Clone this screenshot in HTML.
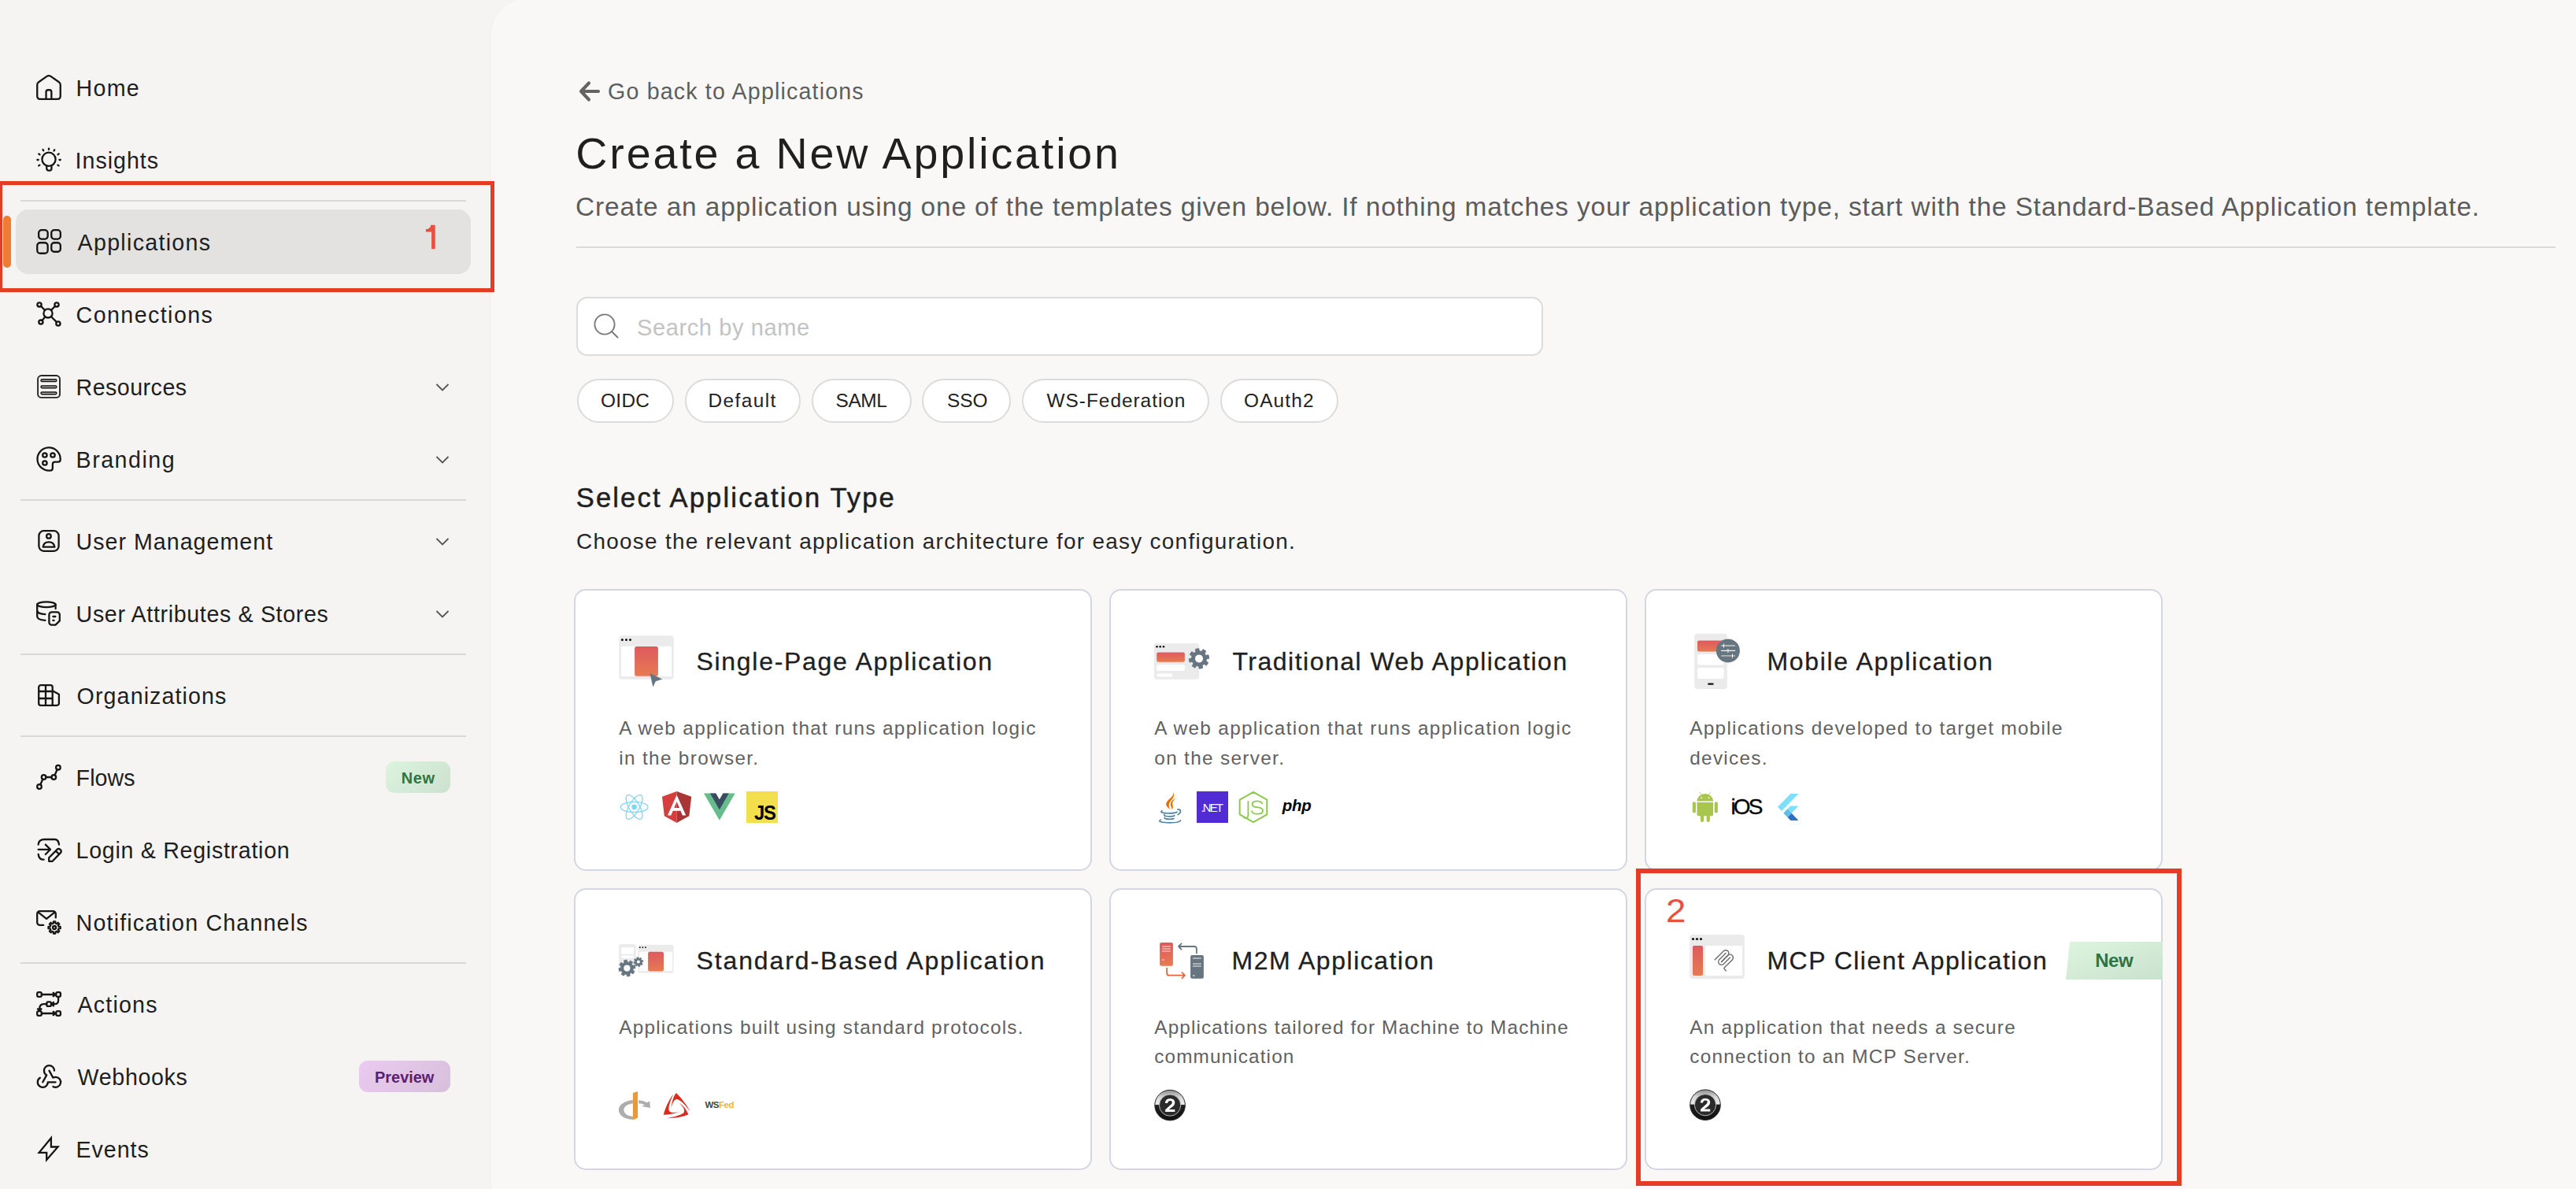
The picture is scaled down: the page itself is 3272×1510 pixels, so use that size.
<!DOCTYPE html>
<html><head><meta charset="utf-8"><style>
html,body{margin:0;padding:0;width:3272px;height:1510px;overflow:hidden;background:#f5f4f2;font-family:"Liberation Sans", sans-serif;}
.t{position:absolute;white-space:nowrap;line-height:1;}
.b{position:absolute;}
.ic{position:absolute;overflow:visible;}
</style></head><body>
<div class="b" style="left:26.0px;top:254.0px;width:566.0px;height:2.0px;background:#dad8d5"></div>
<div class="b" style="left:26.0px;top:634.0px;width:566.0px;height:2.0px;background:#dad8d5"></div>
<div class="b" style="left:26.0px;top:830.0px;width:566.0px;height:2.0px;background:#dad8d5"></div>
<div class="b" style="left:26.0px;top:934.0px;width:566.0px;height:2.0px;background:#dad8d5"></div>
<div class="b" style="left:26.0px;top:1222.0px;width:566.0px;height:2.0px;background:#dad8d5"></div>
<div class="b" style="left:20.0px;top:266.0px;width:578.0px;height:82.0px;background:#e3e2e0;border-radius:16px"></div>
<div class="b" style="left:4.0px;top:274.0px;width:10.0px;height:66.0px;background:#ee7d31;border-radius:5px"></div>
<div class="t" style="left:96.6px;top:97.8px;font-size:28.6px;color:#1e1e1e;letter-spacing:1.300px;font-weight:400;">Home</div>
<svg class="ic" style="left:46px;top:96px" width="32" height="32" viewBox="0 0 32 32"><path d="M1.25 26 V11.8 Q1.25 9.6 3.1 8.3 L13.6 0.9 Q16 -0.8 18.4 0.9 L28.9 8.3 Q30.75 9.6 30.75 11.8 V26 Q30.75 29.85 26.9 29.85 H5.1 Q1.25 29.85 1.25 26 Z" fill="none" stroke="#151515" stroke-width="2.3" stroke-linecap="round" stroke-linejoin="round"/><path d="M12.55 29.85 V20.8 Q12.55 18.25 15.1 18.25 H16.8 Q19.35 18.25 19.35 20.8 V29.85" fill="none" stroke="#151515" stroke-width="2.3" stroke-linecap="round" stroke-linejoin="round"/></svg>
<div class="t" style="left:95.6px;top:189.8px;font-size:28.6px;color:#1e1e1e;letter-spacing:0.986px;font-weight:400;">Insights</div>
<svg class="ic" style="left:46px;top:188px" width="32" height="32" viewBox="0 0 32 32"><circle cx="16" cy="14.3" r="8.6" fill="none" stroke="#151515" stroke-width="2.3" stroke-linecap="round" stroke-linejoin="round"/><path d="M13.25 22.3 V26 a2.65 2.65 0 0 0 2.65 2.65 H16.8 a2.65 2.65 0 0 0 2.65 -2.65 V22.3" fill="none" stroke="#151515" stroke-width="2.3" stroke-linecap="round" stroke-linejoin="round"/><path d="M16 0.6 L16 1.9" fill="none" stroke="#151515" stroke-width="2.3" stroke-linecap="round" stroke-linejoin="round"/><path d="M8.5 2 L9.2 3.2" fill="none" stroke="#151515" stroke-width="2.3" stroke-linecap="round" stroke-linejoin="round"/><path d="M23.2 2.3 L22.5 3.5" fill="none" stroke="#151515" stroke-width="2.3" stroke-linecap="round" stroke-linejoin="round"/><path d="M3.3 7.5 L4.5 8.3" fill="none" stroke="#151515" stroke-width="2.3" stroke-linecap="round" stroke-linejoin="round"/><path d="M28.7 7.4 L27.5 8.2" fill="none" stroke="#151515" stroke-width="2.3" stroke-linecap="round" stroke-linejoin="round"/><path d="M1.4 15 L2.7 15" fill="none" stroke="#151515" stroke-width="2.3" stroke-linecap="round" stroke-linejoin="round"/><path d="M29.5 15 L30.8 15" fill="none" stroke="#151515" stroke-width="2.3" stroke-linecap="round" stroke-linejoin="round"/><path d="M3.2 22.4 L4.4 21.6" fill="none" stroke="#151515" stroke-width="2.3" stroke-linecap="round" stroke-linejoin="round"/><path d="M28.6 22.4 L27.4 21.6" fill="none" stroke="#151515" stroke-width="2.3" stroke-linecap="round" stroke-linejoin="round"/></svg>
<div class="t" style="left:98.6px;top:293.8px;font-size:28.6px;color:#1e1e1e;letter-spacing:1.291px;font-weight:400;">Applications</div>
<svg class="ic" style="left:46px;top:292px" width="32" height="32" viewBox="0 0 32 32"><rect x="3.15" y="0.15" width="11.5" height="11.4" rx="3.6" fill="none" stroke="#151515" stroke-width="2.3" stroke-linecap="round" stroke-linejoin="round"/><rect x="19.25" y="0.15" width="11.6" height="11.4" rx="3.6" fill="none" stroke="#151515" stroke-width="2.3" stroke-linecap="round" stroke-linejoin="round"/><rect x="1.25" y="16.25" width="13.4" height="13.5" rx="3.8" fill="none" stroke="#151515" stroke-width="2.3" stroke-linecap="round" stroke-linejoin="round"/><rect x="19.25" y="16.25" width="11.6" height="11.5" rx="3.6" fill="none" stroke="#151515" stroke-width="2.3" stroke-linecap="round" stroke-linejoin="round"/></svg>
<div class="t" style="left:96.6px;top:385.8px;font-size:28.6px;color:#1e1e1e;letter-spacing:1.430px;font-weight:400;">Connections</div>
<svg class="ic" style="left:46px;top:384px" width="32" height="32" viewBox="0 0 32 32"><circle cx="15" cy="13.9" r="5.6" fill="none" stroke="#151515" stroke-width="2.3" stroke-linecap="round" stroke-linejoin="round"/><circle cx="4" cy="2.9" r="2.6" fill="none" stroke="#151515" stroke-width="2.3" stroke-linecap="round" stroke-linejoin="round"/><circle cx="26" cy="2.9" r="2.6" fill="none" stroke="#151515" stroke-width="2.3" stroke-linecap="round" stroke-linejoin="round"/><circle cx="5.9" cy="25.1" r="2.6" fill="none" stroke="#151515" stroke-width="2.3" stroke-linecap="round" stroke-linejoin="round"/><circle cx="27.9" cy="27" r="2.6" fill="none" stroke="#151515" stroke-width="2.3" stroke-linecap="round" stroke-linejoin="round"/><path d="M5.9 4.8 L11 9.9 M24.1 4.8 L19 9.9 M7.4 23 L11.3 18.4 M26 25.1 L19.1 18.2" fill="none" stroke="#151515" stroke-width="2.3" stroke-linecap="round" stroke-linejoin="round"/></svg>
<div class="t" style="left:96.6px;top:477.8px;font-size:28.6px;color:#1e1e1e;letter-spacing:0.475px;font-weight:400;">Resources</div>
<svg class="ic" style="left:46px;top:476px" width="32" height="32" viewBox="0 0 32 32"><rect x="2.1" y="1" width="27.9" height="27.9" rx="4.5" fill="none" stroke="#252525" stroke-width="1.9"/><g fill="#bdbdbd" stroke="#111" stroke-width="1.4"><rect x="6" y="5.8" width="19.9" height="2.7" rx="1.35"/><rect x="6" y="14" width="19.9" height="2.7" rx="1.35"/><rect x="6" y="22" width="19.9" height="2.7" rx="1.35"/></g></svg>
<svg class="ic" style="left:553px;top:486px" width="18" height="12" viewBox="0 0 18 12"><path d="M1.5 2 L9 9.5 L16.5 2" fill="none" stroke="#555" stroke-width="1.8"/></svg>
<div class="t" style="left:96.6px;top:569.8px;font-size:28.6px;color:#1e1e1e;letter-spacing:1.500px;font-weight:400;">Branding</div>
<svg class="ic" style="left:46px;top:568px" width="32" height="32" viewBox="0 0 32 32"><path d="M30.7 15 A14.6 14.6 0 1 0 17.6 29.55 Q20.85 29.55 20.85 26.5 V21.5 Q20.85 18.6 23.7 18.6 H27.8 Q30.7 18.6 30.7 15.8 Z" fill="none" stroke="#151515" stroke-width="2.3" stroke-linecap="round" stroke-linejoin="round"/><circle cx="10.9" cy="10" r="2.7" fill="none" stroke="#151515" stroke-width="2.3" stroke-linecap="round" stroke-linejoin="round" stroke-width="2.1"/><circle cx="21" cy="10" r="2.7" fill="none" stroke="#151515" stroke-width="2.3" stroke-linecap="round" stroke-linejoin="round" stroke-width="2.1"/><circle cx="10.9" cy="20" r="2.7" fill="none" stroke="#151515" stroke-width="2.3" stroke-linecap="round" stroke-linejoin="round" stroke-width="2.1"/></svg>
<svg class="ic" style="left:553px;top:578px" width="18" height="12" viewBox="0 0 18 12"><path d="M1.5 2 L9 9.5 L16.5 2" fill="none" stroke="#555" stroke-width="1.8"/></svg>
<div class="t" style="left:96.6px;top:673.8px;font-size:28.6px;color:#1e1e1e;letter-spacing:1.021px;font-weight:400;">User Management</div>
<svg class="ic" style="left:46px;top:672px" width="32" height="32" viewBox="0 0 32 32"><rect x="3.4" y="2.2" width="25.2" height="25.6" rx="6.2" fill="none" stroke="#151515" stroke-width="2.3" stroke-linecap="round" stroke-linejoin="round"/><circle cx="15.9" cy="8.9" r="2.8" fill="none" stroke="#151515" stroke-width="2.3" stroke-linecap="round" stroke-linejoin="round" stroke-width="2.1"/><path d="M8.6 22.6 C9.2 18.6 12.2 16.4 16 16.4 C19.8 16.4 22.8 18.6 23.4 22.6 Z" fill="none" stroke="#151515" stroke-width="2.3" stroke-linecap="round" stroke-linejoin="round"/></svg>
<svg class="ic" style="left:553px;top:682px" width="18" height="12" viewBox="0 0 18 12"><path d="M1.5 2 L9 9.5 L16.5 2" fill="none" stroke="#555" stroke-width="1.8"/></svg>
<div class="t" style="left:96.6px;top:765.8px;font-size:28.6px;color:#1e1e1e;letter-spacing:0.656px;font-weight:400;">User Attributes &amp; Stores</div>
<svg class="ic" style="left:46px;top:764px" width="32" height="32" viewBox="0 0 32 32"><ellipse cx="12.9" cy="3.75" rx="11.7" ry="3.45" fill="none" stroke="#151515" stroke-width="2.3" stroke-linecap="round" stroke-linejoin="round"/><path d="M1.2 3.75 V18.5 C1.2 21.5 5 23.5 11.4 23.9 M1.3 11.5 C1.6 14.2 5.5 15.8 11.4 16.1 M24.6 3.75 V9" fill="none" stroke="#151515" stroke-width="2.3" stroke-linecap="round" stroke-linejoin="round"/><path d="M16.4 25.8 V16.5 a3.2 3.2 0 0 1 3.2 -3.2 H26.6 a3.2 3.2 0 0 1 3.2 3.2 V24.4 L24.5 29.6 H19.6 a3.2 3.2 0 0 1 -3.2 -3.2 Z" fill="none" stroke="#151515" stroke-width="2.3" stroke-linecap="round" stroke-linejoin="round"/><path d="M21.4 19 H24.4 M21.4 23.9 H22.6" fill="none" stroke="#151515" stroke-width="2.3" stroke-linecap="round" stroke-linejoin="round" stroke-width="2.2"/></svg>
<svg class="ic" style="left:553px;top:774px" width="18" height="12" viewBox="0 0 18 12"><path d="M1.5 2 L9 9.5 L16.5 2" fill="none" stroke="#555" stroke-width="1.8"/></svg>
<div class="t" style="left:97.6px;top:869.8px;font-size:28.6px;color:#1e1e1e;letter-spacing:1.117px;font-weight:400;">Organizations</div>
<svg class="ic" style="left:46px;top:868px" width="32" height="32" viewBox="0 0 32 32"><path d="M20.7 27.8 H5.8 a2.6 2.6 0 0 1 -2.6 -2.6 V4.8 a2.6 2.6 0 0 1 2.6 -2.6 H18.1 a2.6 2.6 0 0 1 2.6 2.6 Z M3.2 10 H20.7 M3.2 19 H20.7 M12 2.2 V27.8 M20.7 9.2 L28.9 13.8 V25.2 a2.6 2.6 0 0 1 -2.6 2.6 H20.7" fill="none" stroke="#151515" stroke-width="2.3" stroke-linecap="round" stroke-linejoin="round"/></svg>
<div class="t" style="left:96.6px;top:973.8px;font-size:28.6px;color:#1e1e1e;letter-spacing:0.075px;font-weight:400;">Flows</div>
<svg class="ic" style="left:46px;top:972px" width="32" height="32" viewBox="0 0 32 32"><circle cx="4" cy="27" r="2.8" fill="none" stroke="#151515" stroke-width="2.3" stroke-linecap="round" stroke-linejoin="round"/><circle cx="9.6" cy="15" r="2.8" fill="none" stroke="#151515" stroke-width="2.3" stroke-linecap="round" stroke-linejoin="round"/><circle cx="22.3" cy="15" r="2.8" fill="none" stroke="#151515" stroke-width="2.3" stroke-linecap="round" stroke-linejoin="round"/><circle cx="27.9" cy="2.7" r="2.8" fill="none" stroke="#151515" stroke-width="2.3" stroke-linecap="round" stroke-linejoin="round"/><path d="M5.2 24.5 L8.4 17.5 M12.4 15 H19.5 M23.5 12.5 L26.7 5.2" fill="none" stroke="#151515" stroke-width="2.3" stroke-linecap="round" stroke-linejoin="round"/></svg>
<div class="t" style="left:96.6px;top:1065.8px;font-size:28.6px;color:#1e1e1e;letter-spacing:0.717px;font-weight:400;">Login &amp; Registration</div>
<svg class="ic" style="left:46px;top:1064px" width="32" height="32" viewBox="0 0 32 32"><path d="M2.7 8.5 C3 4.3 6 2 10.5 2 H23.5 C26.8 2 28.6 4.6 29 8.7 M2.7 20.9 C3 25 5.5 27.7 9.6 27.7" fill="none" stroke="#151515" stroke-width="2.3" stroke-linecap="round" stroke-linejoin="round"/><path d="M2.7 14.8 H18 M11.8 8.6 L18 14.8 L11.8 21" fill="none" stroke="#151515" stroke-width="2.3" stroke-linecap="round" stroke-linejoin="round"/><path d="M16.2 29.8 V25.2 L26.8 14.6 a2.3 2.3 0 0 1 3.3 0 L31.1 15.6 a2.3 2.3 0 0 1 0 3.3 L20.6 29.8 Z M24.8 16.6 L29 20.8" fill="none" stroke="#151515" stroke-width="2.3" stroke-linecap="round" stroke-linejoin="round"/></svg>
<div class="t" style="left:96.6px;top:1157.8px;font-size:28.6px;color:#1e1e1e;letter-spacing:1.185px;font-weight:400;">Notification Channels</div>
<svg class="ic" style="left:46px;top:1156px" width="32" height="32" viewBox="0 0 32 32"><path d="M24.8 9.4 V4.6 a3.5 3.5 0 0 0 -3.5 -3.5 H4.7 a3.5 3.5 0 0 0 -3.5 3.5 V15.4 a3.5 3.5 0 0 0 3.5 3.5 H9.2 M2 2.2 L13.1 10.9 L24 2.2" fill="none" stroke="#151515" stroke-width="2.3" stroke-linecap="round" stroke-linejoin="round"/><path d="M21.79 16.55 L21.90 14.39 L24.30 14.39 L24.41 16.55 L26.03 17.23 L27.63 15.77 L29.33 17.47 L27.87 19.07 L28.55 20.69 L30.71 20.80 L30.71 23.20 L28.55 23.31 L27.87 24.93 L29.33 26.53 L27.63 28.23 L26.03 26.77 L24.41 27.45 L24.30 29.61 L21.90 29.61 L21.79 27.45 L20.17 26.77 L18.57 28.23 L16.87 26.53 L18.33 24.93 L17.65 23.31 L15.49 23.20 L15.49 20.80 L17.65 20.69 L18.33 19.07 L16.87 17.47 L18.57 15.77 L20.17 17.23 Z" fill="none" stroke="#151515" stroke-width="2.3" stroke-linecap="round" stroke-linejoin="round" stroke-width="2"/><circle cx="23.1" cy="22" r="2" fill="none" stroke="#151515" stroke-width="2.3" stroke-linecap="round" stroke-linejoin="round" stroke-width="2"/></svg>
<div class="t" style="left:98.6px;top:1261.8px;font-size:28.6px;color:#1e1e1e;letter-spacing:1.183px;font-weight:400;">Actions</div>
<svg class="ic" style="left:46px;top:1260px" width="32" height="32" viewBox="0 0 32 32"><rect x="1.2" y="0.2" width="5.6" height="5.6" rx="1.8" fill="none" stroke="#151515" stroke-width="2.3" stroke-linecap="round" stroke-linejoin="round"/><rect x="25.3" y="0.2" width="5.6" height="5.6" rx="1.8" fill="none" stroke="#151515" stroke-width="2.3" stroke-linecap="round" stroke-linejoin="round"/><rect x="13.3" y="12.35" width="5.6" height="5.6" rx="1.8" fill="none" stroke="#151515" stroke-width="2.3" stroke-linecap="round" stroke-linejoin="round"/><rect x="1.2" y="24.2" width="5.6" height="5.6" rx="1.8" fill="none" stroke="#151515" stroke-width="2.3" stroke-linecap="round" stroke-linejoin="round"/><rect x="25.3" y="24.2" width="5.6" height="5.6" rx="1.8" fill="none" stroke="#151515" stroke-width="2.3" stroke-linecap="round" stroke-linejoin="round"/><path d="M6.8 3 H24.3 M21.8 0.8 L24.3 3 L21.8 5.2 M28.1 5.8 V10.5 Q28.1 15.15 23.4 15.15 H19.8 M22 12.9 L19.8 15.15 L22 17.4 M13.3 15.15 H9.5 Q4.4 15.15 4.2 21 V23.4 M2 21.2 L4.2 23.4 L6.4 21.2 M6.8 27 H24.3 M21.8 24.8 L24.3 27 L21.8 29.2" fill="none" stroke="#151515" stroke-width="2.3" stroke-linecap="round" stroke-linejoin="round"/></svg>
<div class="t" style="left:98.6px;top:1353.8px;font-size:28.6px;color:#1e1e1e;letter-spacing:0.671px;font-weight:400;">Webhooks</div>
<svg class="ic" style="left:46px;top:1352px" width="32" height="32" viewBox="0 0 32 32"><g transform="translate(-3.1 -5.4) scale(1.63)" fill="none" stroke="#151515" stroke-width="1.41" stroke-linecap="round" stroke-linejoin="round"><path d="M4.876 13.61a4 4 0 1 0 6.124 3.39h6"/><path d="M15.066 20.502a4 4 0 1 0 1.934 -7.502c-.706 0 -1.424 .179 -2 .5l-3 -5.5"/><path d="M16 8a4 4 0 1 0 -8 0c0 1.506 .77 2.818 2 3.5l-3 5.5"/></g></svg>
<div class="t" style="left:96.6px;top:1445.8px;font-size:28.6px;color:#1e1e1e;letter-spacing:0.940px;font-weight:400;">Events</div>
<svg class="ic" style="left:46px;top:1444px" width="32" height="32" viewBox="0 0 32 32"><path d="M18.9 1.2 V12.5 H27.6 L13.2 29 V19.8 H3.6 Z" fill="none" stroke="#151515" stroke-width="2.3" stroke-linejoin="miter" stroke-miterlimit="10"/></svg>
<div class="b" style="left:490.0px;top:967.0px;width:82.0px;height:40.0px;background:linear-gradient(135deg,#dcf3de,#cce2cf);border-radius:11px"></div>
<div class="t" style="left:509.7px;top:978.1px;font-size:20px;color:#2f7443;letter-spacing:0.600px;font-weight:700;">New</div>
<div class="b" style="left:456.0px;top:1347.0px;width:116.0px;height:40.0px;background:linear-gradient(135deg,#ebcaf1,#d7c0db);border-radius:11px"></div>
<div class="t" style="left:476.0px;top:1358.1px;font-size:20px;color:#5a2170;letter-spacing:-0.030px;font-weight:700;">Preview</div>
<div class="b" style="left:624px;top:-2px;width:2700px;height:1600px;background:#f9f8f6;border-top-left-radius:46px;box-shadow:0 0 5px rgba(0,0,0,0.022)"></div>
<svg class="ic" style="left:734px;top:102px" width="30" height="28" viewBox="0 0 30 28"><path d="M14 3.5 L4 14 L14 24.5 M4.5 14 H26" fill="none" stroke="#636363" stroke-width="4.1" stroke-linecap="round" stroke-linejoin="round"/></svg>
<div class="t" style="left:772.1px;top:101.8px;font-size:28.6px;color:#5e5e5e;letter-spacing:1.168px;font-weight:400;">Go back to Applications</div>
<div class="t" style="left:731.3px;top:167.7px;font-size:55.6px;color:#1f1f1f;letter-spacing:2.848px;font-weight:400;">Create a New Application</div>
<div class="t" style="left:731.0px;top:245.7px;font-size:33.4px;color:#5c5c5c;letter-spacing:0.877px;font-weight:400;">Create an application using one of the templates given below. If nothing matches your application type, start with the Standard-Based Application template.</div>
<div class="b" style="left:732.0px;top:313.0px;width:2514.0px;height:2.0px;background:#d9d9d9"></div>
<div class="b" style="left:732.0px;top:377.0px;width:1228.0px;height:75.0px;background:#fff;border:2px solid #dcdcdc;border-radius:14px;box-sizing:border-box"></div>
<svg class="ic" style="left:750px;top:394px" width="40" height="40" viewBox="0 0 40 40"><circle cx="18" cy="18" r="12.6" fill="none" stroke="#7a7a7a" stroke-width="1.9"/><path d="M27 27 L34.5 34.5" stroke="#7a7a7a" stroke-width="1.9" stroke-linecap="round"/></svg>
<div class="t" style="left:809.0px;top:402.0px;font-size:29px;color:#c3c3c3;letter-spacing:0.615px;font-weight:400;">Search by name</div>
<div class="b" style="left:732.8px;top:481.0px;width:123.0px;height:56.0px;background:#fff;border:2px solid #dcdcdc;border-radius:28px;box-sizing:border-box"></div>
<div class="t" style="left:763.0px;top:497.3px;font-size:24.4px;color:#222;letter-spacing:0.333px;font-weight:400;">OIDC</div>
<div class="b" style="left:869.9px;top:481.0px;width:147.0px;height:56.0px;background:#fff;border:2px solid #dcdcdc;border-radius:28px;box-sizing:border-box"></div>
<div class="t" style="left:899.5px;top:497.3px;font-size:24.4px;color:#222;letter-spacing:1.417px;font-weight:400;">Default</div>
<div class="b" style="left:1031.0px;top:481.0px;width:127.2px;height:56.0px;background:#fff;border:2px solid #dcdcdc;border-radius:28px;box-sizing:border-box"></div>
<div class="t" style="left:1061.5px;top:497.3px;font-size:24.4px;color:#222;letter-spacing:-0.333px;font-weight:400;">SAML</div>
<div class="b" style="left:1171.4px;top:481.0px;width:112.6px;height:56.0px;background:#fff;border:2px solid #dcdcdc;border-radius:28px;box-sizing:border-box"></div>
<div class="t" style="left:1202.9px;top:497.3px;font-size:24.4px;color:#222;letter-spacing:0.000px;font-weight:400;">SSO</div>
<div class="b" style="left:1298.0px;top:481.0px;width:238.0px;height:56.0px;background:#fff;border:2px solid #dcdcdc;border-radius:28px;box-sizing:border-box"></div>
<div class="t" style="left:1329.6px;top:497.3px;font-size:24.4px;color:#222;letter-spacing:0.983px;font-weight:400;">WS-Federation</div>
<div class="b" style="left:1550.0px;top:481.0px;width:149.8px;height:56.0px;background:#fff;border:2px solid #dcdcdc;border-radius:28px;box-sizing:border-box"></div>
<div class="t" style="left:1580.0px;top:497.3px;font-size:24.4px;color:#222;letter-spacing:1.160px;font-weight:400;">OAuth2</div>
<div class="t" style="left:731.7px;top:614.8px;font-size:34.5px;color:#1f1f1f;letter-spacing:2.182px;font-weight:400;-webkit-text-stroke:0.5px #1f1f1f;">Select Application Type</div>
<div class="t" style="left:732.0px;top:674.1px;font-size:27.9px;color:#262626;letter-spacing:1.290px;font-weight:400;">Choose the relevant application architecture for easy configuration.</div>
<div class="b" style="left:729.0px;top:748.0px;width:658.0px;height:358.0px;background:#fff;border:2px solid #d4d6e1;border-radius:15px;box-sizing:border-box"></div>
<div class="t" style="left:884.5px;top:824.1px;font-size:32px;color:#1f1f1f;letter-spacing:1.705px;font-weight:400;-webkit-text-stroke:0.3px #1f1f1f;">Single-Page Application</div>
<div class="t" style="left:786.3px;top:913.2px;font-size:24.3px;color:#616161;letter-spacing:1.341px;font-weight:400;">A web application that runs application logic</div>
<div class="t" style="left:786.3px;top:950.5px;font-size:24.3px;color:#616161;letter-spacing:1.341px;font-weight:400;">in the browser.</div>
<svg class="ic" style="left:780px;top:800px" width="70" height="80" viewBox="780 800 70 80"><defs><linearGradient id="rgspa" x1="0" y1="0" x2="0" y2="1"><stop offset="0" stop-color="#dd5a5e"/><stop offset="1" stop-color="#e77a52"/></linearGradient></defs><rect x="786.3" y="807.2" width="69.5" height="55.6" rx="4" fill="#ebebeb"/><rect x="788.9" y="820.9" width="64.2" height="38.1" fill="#fff"/><rect x="806.1" y="821.1" width="29.8" height="37.7" rx="2.5" fill="url(#rgspa)"/><circle cx="790.4" cy="812.4" r="1.5" fill="#111"/><circle cx="795.5" cy="812.4" r="1.5" fill="#111"/><circle cx="800.5" cy="812.4" r="1.5" fill="#111"/><path d="M825.9 855.4 L840.6 862.5 L832.6 865 L829.5 871.8 Z" fill="#66757f" stroke="#66757f" stroke-width="0.6" stroke-linejoin="round"/></svg>
<svg class="ic" style="left:785px;top:1003px" width="42" height="44" viewBox="785 1003 42 44"><ellipse cx="805.6" cy="1024.9" rx="17.4" ry="6.6" transform="rotate(0 805.6 1024.9)" fill="none" stroke="#80d4f4" stroke-width="1.3"/><ellipse cx="805.6" cy="1024.9" rx="17.4" ry="6.6" transform="rotate(60 805.6 1024.9)" fill="none" stroke="#80d4f4" stroke-width="1.3"/><ellipse cx="805.6" cy="1024.9" rx="17.4" ry="6.6" transform="rotate(120 805.6 1024.9)" fill="none" stroke="#80d4f4" stroke-width="1.3"/><circle cx="805.6" cy="1024.9" r="3.3" fill="#80d4f4"/></svg><svg class="ic" style="left:838px;top:1003px" width="44" height="44" viewBox="838 1003 44 44"><g transform="translate(834.6 999) scale(0.2)"><polygon fill="#d43f3e" points="125,30 31.9,63.2 46.1,186.3 125,230"/><polygon fill="#a83637" points="125,30 218.1,63.2 203.9,186.3 125,230"/><path fill="#fff" d="M125,52.1L66.8,182.6h21.7l11.7-29.2h49.4l11.7,29.2h21.7L125,52.1z M142,135.4H108l17-40.9L142,135.4z"/></g></svg><svg class="ic" style="left:892px;top:1005px" width="44" height="40" viewBox="892 1005 44 40"><g transform="translate(894 1007.6) scale(0.1517 0.151)"><path fill="#67bc8b" d="M161.096.001l-30.225 52.351L100.647.001H-.005l130.877 226.688L261.749.001z"/><path fill="#384b61" d="M161.096.001l-30.225 52.351L100.647.001H52.346l78.526 136.01L209.398.001z"/></g></svg><div class="b" style="left:948px;top:1005px;width:40px;height:40px;background:#f2df4b"></div><div class="t" style="left:958px;top:1019.3px;font-size:26.5px;font-weight:700;color:#000;letter-spacing:-1.5px;transform:scaleX(0.9);transform-origin:0 0">JS</div>
<div class="b" style="left:1409.0px;top:748.0px;width:658.0px;height:358.0px;background:#fff;border:2px solid #d4d6e1;border-radius:15px;box-sizing:border-box"></div>
<div class="t" style="left:1565.5px;top:824.1px;font-size:32px;color:#1f1f1f;letter-spacing:1.488px;font-weight:400;-webkit-text-stroke:0.3px #1f1f1f;">Traditional Web Application</div>
<div class="t" style="left:1466.3px;top:913.2px;font-size:24.3px;color:#616161;letter-spacing:1.341px;font-weight:400;">A web application that runs application logic</div>
<div class="t" style="left:1466.3px;top:950.5px;font-size:24.3px;color:#616161;letter-spacing:1.341px;font-weight:400;">on the server.</div>
<svg class="ic" style="left:1460px;top:810px" width="80" height="60" viewBox="1460 810 80 60"><defs><linearGradient id="rgtwa" x1="0" y1="0" x2="0" y2="1"><stop offset="0" stop-color="#dd5a5e"/><stop offset="1" stop-color="#e77a52"/></linearGradient></defs><rect x="1466" y="817" width="57" height="45.7" rx="3" fill="#ebebeb"/><circle cx="1469.5" cy="821.3" r="1.3" fill="#111"/><circle cx="1473.7" cy="821.3" r="1.3" fill="#111"/><circle cx="1478" cy="821.3" r="1.3" fill="#111"/><rect x="1469.2" y="828.4" width="35.7" height="12.3" rx="2" fill="url(#rgtwa)"/><rect x="1469.2" y="844" width="35.7" height="8" rx="2" fill="#fff"/><rect x="1469.2" y="855.5" width="20.2" height="4.1" rx="2" fill="#fff"/><path d="M1531.67 832.28 L1535.01 831.70 L1535.90 836.15 L1532.59 836.89 L1532.05 839.62 L1534.82 841.57 L1532.30 845.34 L1529.43 843.53 L1527.12 845.07 L1527.70 848.41 L1523.25 849.30 L1522.51 845.99 L1519.78 845.45 L1517.83 848.22 L1514.06 845.70 L1515.87 842.83 L1514.33 840.52 L1510.99 841.10 L1510.10 836.65 L1513.41 835.91 L1513.95 833.18 L1511.18 831.23 L1513.70 827.46 L1516.57 829.27 L1518.88 827.73 L1518.30 824.39 L1522.75 823.50 L1523.49 826.81 L1526.22 827.35 L1528.17 824.58 L1531.94 827.10 L1530.13 829.97 Z" fill="#66757f" stroke="#66757f" stroke-width="0.8" stroke-linejoin="round"/><circle cx="1523" cy="836.4" r="5" fill="#fff"/></svg>
<svg class="ic" style="left:1468px;top:1003px" width="36" height="44" viewBox="1468 1003 36 44"><path fill="#e76f00" d="M1490.3 1005.2 C1492.5 1012 1482.5 1015 1481.2 1020.5 C1480.6 1023.7 1483.5 1026.2 1486.8 1028 C1484.6 1025.2 1484 1022.2 1485.6 1019.2 C1488.2 1015 1493.2 1011.8 1490.3 1005.2 Z"/><path fill="#e76f00" d="M1494.9 1012.8 C1490 1015.2 1486.4 1018 1486.8 1022.2 C1487.1 1024.6 1488.9 1026.2 1488.3 1028.2 C1490.7 1025.6 1489.7 1023.2 1489.2 1021.2 C1488.7 1018.2 1491.2 1015.5 1494.9 1012.8 Z"/><g fill="none" stroke="#5382a1" stroke-width="1.7" stroke-linecap="round"><path d="M1476 1029.8 C1472.5 1031.6 1477.5 1032.8 1485.5 1032.8 C1490.5 1032.8 1493.5 1032.2 1495 1031.2"/><path d="M1495.8 1028 C1500.2 1027.6 1501 1031.8 1496.2 1034.6"/><path d="M1479 1034.5 C1477.6 1036 1481.2 1036.8 1486 1036.8 C1489.2 1036.8 1491.2 1036.3 1491.8 1035.6"/><path d="M1479.4 1038.3 C1478.4 1039.8 1481.8 1040.4 1486 1040.4 C1488.8 1040.4 1490.4 1040 1491 1039.4"/><path d="M1474.2 1041.2 C1470 1043.3 1476 1044.8 1486 1044.8 C1493.5 1044.8 1498.8 1043.8 1499.6 1042"/></g></svg><div class="b" style="left:1520px;top:1005px;width:40px;height:40px;background:#512bd4"></div><div class="t" style="left:1525.5px;top:1017.6px;font-size:15px;color:#fff;letter-spacing:-1.9px">.NET</div><svg class="ic" style="left:1572px;top:1003px" width="40" height="44" viewBox="1572 1003 40 44"><path d="M1592 1005.8 L1609.3 1015.6 V1034.4 L1592 1044.2 L1574.7 1034.4 V1015.6 Z" fill="none" stroke="#8cc84b" stroke-width="2" stroke-linejoin="round"/><path d="M1585.4 1017.3 V1035.5 C1585.4 1039.5 1582 1039.5 1579.5 1038" fill="none" stroke="#8cc84b" stroke-width="1.8"/><path d="M1603.3 1021.2 C1602.8 1018.3 1600.2 1017.4 1597 1017.4 C1593.2 1017.4 1590.6 1018.6 1590.6 1021.4 C1590.6 1024.3 1593.8 1024.9 1597 1025.2 C1600.8 1025.6 1604 1026.4 1604 1029.4 C1604 1032.4 1601 1033.7 1597 1033.7 C1593.2 1033.7 1590.2 1032.5 1589.9 1029.5" fill="none" stroke="#8cc84b" stroke-width="1.8"/></svg><div class="t" style="left:1628.8px;top:1013.2px;font-size:20.5px;font-weight:700;font-style:italic;color:#000;letter-spacing:-0.3px">php</div>
<div class="b" style="left:2089.0px;top:748.0px;width:658.0px;height:358.0px;background:#fff;border:2px solid #d4d6e1;border-radius:15px;box-sizing:border-box"></div>
<div class="t" style="left:2244.5px;top:824.1px;font-size:32px;color:#1f1f1f;letter-spacing:1.665px;font-weight:400;-webkit-text-stroke:0.3px #1f1f1f;">Mobile Application</div>
<div class="t" style="left:2146.3px;top:913.2px;font-size:24.3px;color:#616161;letter-spacing:1.289px;font-weight:400;">Applications developed to target mobile</div>
<div class="t" style="left:2146.3px;top:950.5px;font-size:24.3px;color:#616161;letter-spacing:1.289px;font-weight:400;">devices.</div>
<svg class="ic" style="left:2145px;top:800px" width="70" height="80" viewBox="2145 800 70 80"><defs><linearGradient id="rgmob" x1="0" y1="0" x2="0" y2="1"><stop offset="0" stop-color="#dd5a5e"/><stop offset="1" stop-color="#e77a52"/></linearGradient></defs><rect x="2152.1" y="804.8" width="41.8" height="70.1" rx="4" fill="#ebebeb"/><rect x="2156" y="813.5" width="33.6" height="14.1" rx="2" fill="url(#rgmob)"/><rect x="2156" y="831" width="33.6" height="13.6" rx="2.5" fill="#fff"/><rect x="2156" y="848" width="33.6" height="14" rx="2.5" fill="#fff"/><rect x="2169.1" y="867.4" width="7.6" height="2.4" rx="1.2" fill="#111"/><circle cx="2194.9" cy="826.4" r="15" fill="#66757f"/><path d="M2186.2 820 H2204 M2186.2 832.9 H2204" stroke="#c9ccce" stroke-width="1.4"/><path d="M2186.2 826.4 H2204" stroke="#fff" stroke-width="1.2"/><path d="M2189.4 817.5 V822.5 M2194.9 824 V829 M2200.5 830.5 V835.5" stroke="#fff" stroke-width="1"/></svg>
<svg class="ic" style="left:2147px;top:1003px" width="38" height="44" viewBox="2147 1003 38 44"><g fill="#a8c64e"><path d="M2155.5 1017.6 A10.3 9.6 0 0 1 2176.1 1017.6 Z"/><path d="M2155.5 1019 H2176.1 V1034.3 a2 2 0 0 1 -2 2 H2157.5 a2 2 0 0 1 -2 -2 Z"/><rect x="2149.8" y="1018.3" width="4.2" height="14.3" rx="2.1"/><rect x="2177.7" y="1018.3" width="4.2" height="14.3" rx="2.1"/><rect x="2159.9" y="1033" width="4.3" height="11.1" rx="2.1"/><rect x="2167.6" y="1033" width="4.3" height="11.1" rx="2.1"/></g><path d="M2159.2 1006 L2161.2 1009.2 M2172.6 1006 L2170.6 1009.2" stroke="#a8c64e" stroke-width="0.8"/><circle cx="2161.1" cy="1013.2" r="0.9" fill="#fff"/><circle cx="2170.7" cy="1013.2" r="0.9" fill="#fff"/></svg><div class="t" style="left:2198.5px;top:1010.5px;font-size:28px;color:#000;letter-spacing:-2.9px;-webkit-text-stroke:0.3px #000">iOS</div><svg class="ic" style="left:2255px;top:1005px" width="34" height="40" viewBox="2255 1005 34 40"><g transform="translate(2258 1008) scale(0.1035 0.107)"><path fill="#7fdffa" d="M157.666 0L0 157.667l48.8 48.8L255.267 0z"/><path fill="#7fdffa" d="M156.567 145.397L72.15 229.815l48.983 49.716 48.71-48.71 85.424-85.424z"/><path fill="#2f6fc8" d="M121.133 279.531l37.082 37.082h97.052l-85.424-85.425z"/><path fill="#63bbe9" d="M71.6 230.364l48.8-48.801 48.8 48.8-48.8 48.8z"/></g></svg>
<div class="b" style="left:729.0px;top:1127.5px;width:658.0px;height:358.0px;background:#fff;border:2px solid #d4d6e1;border-radius:15px;box-sizing:border-box"></div>
<div class="t" style="left:884.5px;top:1203.6px;font-size:32px;color:#1f1f1f;letter-spacing:1.884px;font-weight:400;-webkit-text-stroke:0.3px #1f1f1f;">Standard-Based Application</div>
<div class="t" style="left:786.3px;top:1292.7px;font-size:24.3px;color:#616161;letter-spacing:1.223px;font-weight:400;">Applications built using standard protocols.</div>
<svg class="ic" style="left:780px;top:1190px" width="80" height="60" viewBox="780 1190 80 60"><defs><linearGradient id="rgstd" x1="0" y1="0" x2="0" y2="1"><stop offset="0" stop-color="#dd5a5e"/><stop offset="1" stop-color="#e77a52"/></linearGradient></defs><rect x="786.2" y="1199.1" width="21.6" height="34" rx="2.5" fill="#ebebeb"/><rect x="789.1" y="1203" width="15.9" height="8.8" rx="1.5" fill="#fff"/><rect x="789.1" y="1213.4" width="15.9" height="3.3" rx="1.5" fill="#fff"/><rect x="810.5" y="1199.8" width="45.1" height="36" rx="3" fill="#ebebeb"/><circle cx="812.8" cy="1203.2" r="0.9" fill="#111"/><circle cx="816.4" cy="1203.2" r="0.9" fill="#111"/><circle cx="820" cy="1203.2" r="0.9" fill="#111"/><rect x="812.2" y="1208.8" width="41.8" height="24.3" fill="#fff"/><rect x="823.1" y="1208.8" width="19.9" height="24.6" rx="2" fill="url(#rgstd)"/><path d="M803.53 1226.21 L806.18 1225.77 L806.90 1229.39 L804.29 1230.00 L803.84 1232.25 L806.02 1233.81 L803.97 1236.88 L801.69 1235.46 L799.79 1236.73 L800.23 1239.38 L796.61 1240.10 L796.00 1237.49 L793.75 1237.04 L792.19 1239.22 L789.12 1237.17 L790.54 1234.89 L789.27 1232.99 L786.62 1233.43 L785.90 1229.81 L788.51 1229.20 L788.96 1226.95 L786.78 1225.39 L788.83 1222.32 L791.11 1223.74 L793.01 1222.47 L792.57 1219.82 L796.19 1219.10 L796.80 1221.71 L799.05 1222.16 L800.61 1219.98 L803.68 1222.03 L802.26 1224.31 Z" fill="#66757f" stroke="#66757f" stroke-width="0.8" stroke-linejoin="round"/><circle cx="796.4" cy="1229.6" r="4.1" fill="#fff"/><path d="M814.87 1219.71 L816.39 1219.45 L816.80 1221.48 L815.29 1221.82 L815.05 1223.07 L816.31 1223.96 L815.15 1225.69 L813.85 1224.87 L812.79 1225.57 L813.05 1227.09 L811.02 1227.50 L810.68 1225.99 L809.43 1225.75 L808.54 1227.01 L806.81 1225.85 L807.63 1224.55 L806.93 1223.49 L805.41 1223.75 L805.00 1221.72 L806.51 1221.38 L806.75 1220.13 L805.49 1219.24 L806.65 1217.51 L807.95 1218.33 L809.01 1217.63 L808.75 1216.11 L810.78 1215.70 L811.12 1217.21 L812.37 1217.45 L813.26 1216.19 L814.99 1217.35 L814.17 1218.65 Z" fill="#66757f" stroke="#66757f" stroke-width="0.8" stroke-linejoin="round"/><circle cx="810.9" cy="1221.6" r="2" fill="#fff"/></svg>
<svg class="ic" style="left:784px;top:1384px" width="44" height="40" viewBox="784 1384 44 40"><path fill="#adadad" d="M803.9 1397 C793 1398.2 785.9 1403 785.9 1409.5 C785.9 1416.5 793.5 1421.5 803.9 1422 L803.9 1417.8 C797 1417.3 792.4 1414 792.4 1409.5 C792.4 1405.5 796.5 1402.4 803.9 1401.3 Z"/><path fill="#adadad" d="M811.2 1397.2 C815.5 1397.6 819 1398.6 821.6 1400.2 L825.2 1398.4 L826 1407 L815.5 1405 L818.9 1403 C816.8 1402 814.2 1401.4 811.2 1401.2 Z"/><path fill="#e8993a" d="M803.9 1388 L810.1 1385.9 V1419.4 L803.9 1422.2 Z"/></svg><svg class="ic" style="left:840px;top:1385px" width="40" height="38" viewBox="840 1385 40 38"><g fill="#d92b1e"><path d="M858.9 1388 C866 1395 872.5 1403.5 876.6 1411.5 C870.5 1403 864.5 1397.2 860.4 1396.2 C856.8 1395.4 854.6 1400 852.6 1407 C853.4 1399.5 855.2 1392.5 858.9 1388 Z"/><path d="M874.4 1415.6 C866 1418.8 856 1420.4 846.5 1420.2 C855 1418.6 864 1416.5 868.2 1413.4 C870.8 1411 868 1405.5 862.5 1400.6 C867.8 1403.8 872.2 1409.6 874.4 1415.6 Z"/><path d="M842.7 1415.7 C845.4 1406.2 850 1396.2 855.4 1389.2 C851.2 1398 848.6 1406.6 849.6 1410 C850.6 1413.2 855.6 1413.6 862.2 1412 C856.2 1414.6 848.6 1415.6 842.7 1415.7 Z"/></g></svg><div class="t" style="left:895.5px;top:1398px;font-size:11.5px;font-weight:700;letter-spacing:-0.5px;color:#444">WS<span style="color:#f1b233">Fed</span></div>
<div class="b" style="left:1409.0px;top:1127.5px;width:658.0px;height:358.0px;background:#fff;border:2px solid #d4d6e1;border-radius:15px;box-sizing:border-box"></div>
<div class="t" style="left:1564.5px;top:1203.6px;font-size:32px;color:#1f1f1f;letter-spacing:1.543px;font-weight:400;-webkit-text-stroke:0.3px #1f1f1f;">M2M Application</div>
<div class="t" style="left:1466.3px;top:1292.7px;font-size:24.3px;color:#616161;letter-spacing:1.133px;font-weight:400;">Applications tailored for Machine to Machine</div>
<div class="t" style="left:1466.3px;top:1330.0px;font-size:24.3px;color:#616161;letter-spacing:1.133px;font-weight:400;">communication</div>
<svg class="ic" style="left:1465px;top:1190px" width="70" height="60" viewBox="1465 1190 70 60"><defs><linearGradient id="rgm2m" x1="0" y1="0" x2="0" y2="1"><stop offset="0" stop-color="#dd5a5e"/><stop offset="1" stop-color="#e77a52"/></linearGradient></defs><rect x="1473.1" y="1197.1" width="16.8" height="29.7" rx="2" fill="url(#rgm2m)"/><path d="M1476.2 1202 H1486.8 M1476.2 1205 H1486.8 M1476.2 1208 H1486.8" stroke="#f0bab4" stroke-width="1.5"/><rect x="1476.2" y="1218.2" width="2.6" height="1.7" fill="#f0bab4"/><rect x="1512.1" y="1213.1" width="16.8" height="29.7" rx="2" fill="#66757f"/><path d="M1515 1217.1 H1525.8 M1515 1224 H1525.8 M1515 1227 H1525.8" stroke="#c5c9cc" stroke-width="1.5"/><rect x="1515" y="1238.2" width="2.6" height="1.7" fill="#c5c9cc"/><path d="M1519.9 1210.3 V1205 Q1519.9 1202 1516.9 1202 H1497 M1500.6 1198.4 L1497 1202 L1500.6 1205.6" fill="none" stroke="#66757f" stroke-width="1.8" stroke-linecap="round" stroke-linejoin="round"/><path d="M1482.1 1229.7 V1235.7 Q1482.1 1238.7 1485.1 1238.7 H1505 M1501.4 1235.1 L1505 1238.7 L1501.4 1242.3" fill="none" stroke="#e5673e" stroke-width="1.8" stroke-linecap="round" stroke-linejoin="round"/></svg>
<svg class="ic" style="left:1465px;top:1382px" width="42" height="42" viewBox="1465 1382 42 42"><defs><linearGradient id="oaa" x1="0" y1="0" x2="0" y2="1"><stop offset="0" stop-color="#8c8c8c"/><stop offset="0.25" stop-color="#d9d9d9"/><stop offset="0.47" stop-color="#ececec"/><stop offset="0.5" stop-color="#1e1e1e"/><stop offset="1" stop-color="#111"/></linearGradient></defs><circle cx="1486.1" cy="1403.6" r="19.3" fill="url(#oaa)" stroke="#2a2a2a" stroke-width="1"/><circle cx="1486.1" cy="1403.6" r="13.6" fill="#2b2b2b" stroke="#c8c8c8" stroke-width="0.9"/><path d="M1480.1 1411.8999999999999 V1409.1999999999998 L1487.6 1402.3999999999999 C1489.6999999999998 1400.3999999999999 1489.1 1398.0 1486.3 1398.0 C1484.1 1398.0 1483.3 1399.3999999999999 1483.1999999999998 1401.0 H1480.0 C1480.1 1397.0 1482.5 1395.3 1486.3 1395.3 C1490.5 1395.3 1492.3 1397.6 1492.3 1400.1999999999998 C1492.3 1402.3999999999999 1491.1 1404.0 1489.3 1405.6 L1484.6999999999998 1408.8999999999999 H1492.3 V1411.8999999999999 Z" fill="#fff"/></svg>
<div class="b" style="left:2089.0px;top:1127.5px;width:658.0px;height:358.0px;background:#fff;border:2px solid #d4d6e1;border-radius:15px;box-sizing:border-box"></div>
<div class="t" style="left:2244.5px;top:1203.6px;font-size:32px;color:#1f1f1f;letter-spacing:1.452px;font-weight:400;-webkit-text-stroke:0.3px #1f1f1f;">MCP Client Application</div>
<div class="t" style="left:2146.3px;top:1292.7px;font-size:24.3px;color:#616161;letter-spacing:1.230px;font-weight:400;">An application that needs a secure</div>
<div class="t" style="left:2146.3px;top:1330.0px;font-size:24.3px;color:#616161;letter-spacing:1.230px;font-weight:400;">connection to an MCP Server.</div>
<svg class="ic" style="left:2140px;top:1180px" width="80" height="70" viewBox="2140 1180 80 70"><defs><linearGradient id="rgmcp" x1="0" y1="0" x2="0" y2="1"><stop offset="0" stop-color="#dd5a5e"/><stop offset="1" stop-color="#e77a52"/></linearGradient></defs><rect x="2146.2" y="1187.1" width="69.7" height="55.9" rx="4" fill="#ebebeb"/><circle cx="2150.5" cy="1192.5" r="1.6" fill="#111"/><circle cx="2155.5" cy="1192.5" r="1.6" fill="#111"/><circle cx="2160.5" cy="1192.5" r="1.6" fill="#111"/><rect x="2150" y="1200.9" width="13" height="38" rx="2" fill="url(#rgmcp)"/><rect x="2165.9" y="1200.9" width="47.1" height="38" rx="2" fill="#fff"/><g transform="translate(2174.2 1203) scale(0.162)" fill="none" stroke="#6f6f6f" stroke-width="9" stroke-linecap="round"><path d="M25 97.8528L92.8823 29.9706C102.255 20.598 117.451 20.598 126.823 29.9706C136.196 39.3431 136.196 54.5391 126.823 63.9117L75.5581 115.177"/><path d="M76.2653 114.47L126.823 63.9117C136.196 54.5391 151.392 54.5391 160.765 63.9117L161.118 64.2652C170.491 73.6378 170.491 88.8338 161.118 98.2063L99.7248 159.6C96.6006 162.724 96.6006 167.789 99.7248 170.913L112.331 183.52"/><path d="M109.853 46.9411L59.6482 97.1457C50.2757 106.518 50.2757 121.714 59.6482 131.087C69.0208 140.459 84.2168 140.459 93.5894 131.087L143.794 80.8822"/></g></svg>
<svg class="ic" style="left:2145px;top:1382px" width="42" height="42" viewBox="2145 1382 42 42"><defs><linearGradient id="oab" x1="0" y1="0" x2="0" y2="1"><stop offset="0" stop-color="#8c8c8c"/><stop offset="0.25" stop-color="#d9d9d9"/><stop offset="0.47" stop-color="#ececec"/><stop offset="0.5" stop-color="#1e1e1e"/><stop offset="1" stop-color="#111"/></linearGradient></defs><circle cx="2166" cy="1403.2" r="19.3" fill="url(#oab)" stroke="#2a2a2a" stroke-width="1"/><circle cx="2166" cy="1403.2" r="13.6" fill="#2b2b2b" stroke="#c8c8c8" stroke-width="0.9"/><path d="M2160 1411.5 V1408.8 L2167.5 1402.0 C2169.6 1400.0 2169 1397.6000000000001 2166.2 1397.6000000000001 C2164 1397.6000000000001 2163.2 1399.0 2163.1 1400.6000000000001 H2159.9 C2160 1396.6000000000001 2162.4 1394.9 2166.2 1394.9 C2170.4 1394.9 2172.2 1397.2 2172.2 1399.8 C2172.2 1402.0 2171 1403.6000000000001 2169.2 1405.2 L2164.6 1408.5 H2172.2 V1411.5 Z" fill="#fff"/></svg>
<svg class="ic" style="left:2624px;top:1196px" width="123" height="48" viewBox="0 0 123 48"><defs><linearGradient id="gn" x1="0" y1="0" x2="1" y2="1"><stop offset="0" stop-color="#ddf5df"/><stop offset="1" stop-color="#c9e2cd"/></linearGradient></defs><path d="M5 0 H123 V48 H0 Z" fill="url(#gn)"/></svg>
<div class="t" style="left:2661.3px;top:1208.2px;font-size:24px;color:#2f7443;letter-spacing:-0.550px;font-weight:700;">New</div>
<div class="b" style="left:-2.0px;top:230.0px;width:630.0px;height:141.0px;border:5px solid #e63c27;box-sizing:border-box"></div>
<svg class="ic" style="left:536px;top:282px" width="22" height="38" viewBox="536 282 22 38"><path d="M547.3 285.7 H552.7 V316.2 H548.1 V294.6 H540.9 V291 C545 290.8 546.8 289 547.3 285.7 Z" fill="#e8503f"/></svg>
<div class="b" style="left:2078.0px;top:1103.0px;width:693.0px;height:403.0px;border:6px solid #e63c27;box-sizing:border-box"></div>
<div class="t" style="left:2116.3px;top:1134.8px;font-size:43px;color:#e8503f;letter-spacing:0.000px;font-weight:400;transform:scaleX(1.06);transform-origin:0 0;">2</div>
</body></html>
